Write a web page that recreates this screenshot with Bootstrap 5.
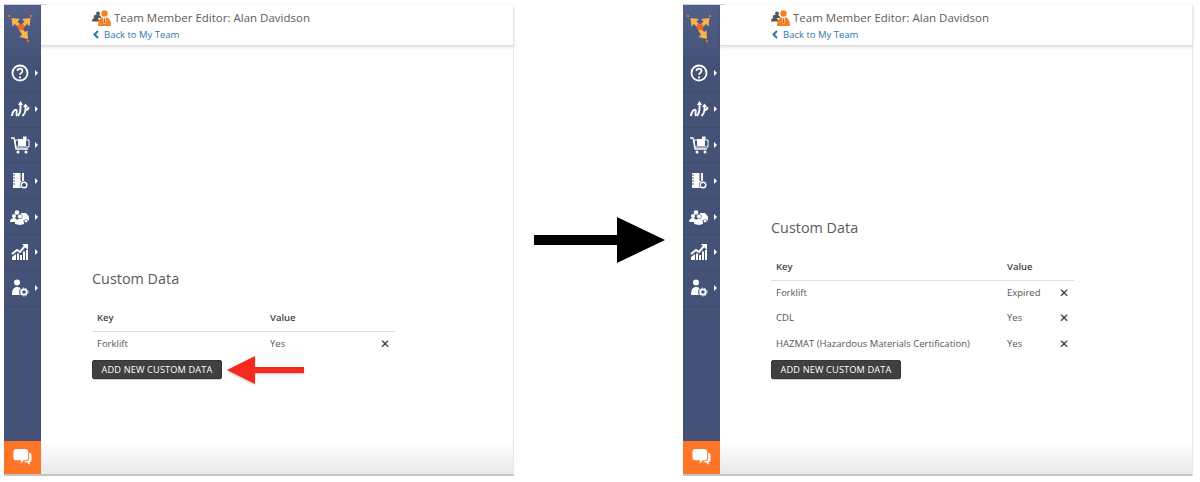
<!DOCTYPE html>
<html lang="en">
<head>
    <meta charset="UTF-8">
    <title>Team Member Editor</title>
    <link href="https://cdn.jsdelivr.net/npm/bootstrap@5.3.0/dist/css/bootstrap.min.css" rel="stylesheet">
    <style>
        html, body { height: 482px; overflow: hidden; background: #fff; }
        body { font-family: "Open Sans", "Liberation Sans", sans-serif; color: #555; padding: 5px 0 6px 4px; }
        .editor-panel { width: 510px; height: 471px; border-right: 1px solid #e8e8e8; border-bottom: 2px solid #c4c4c4; position: relative; }
        .editor-panel::before { content: ""; position: absolute; top: -1px; left: 0; width: 42px; height: 1px; background: #cdd1d9; }
        .arrow-gap { width: 169px; padding: 0 0 1px 20px; }
        .side-rail { width: 37px; background: #445277; }
        .rail-logo { height: 51px; padding-top: 7px; background: linear-gradient(#50608a, #465479); }
        .rail-item { height: 35.8px; border-bottom: 1px solid #3d4a6c; padding-left: 6px; }
        .rail-item svg { width: 20px; height: 20px; }
        .rail-caret { width: 0; height: 0; margin-left: 5px; border-left: 3px solid #fff; border-top: 3px solid transparent; border-bottom: 3px solid transparent; }
        .rail-chat { height: 33px; background: #ff7527; }
        .page-head { height: 41px; padding: 4px 0 0 51px; border-bottom: 1px solid #ddd; box-shadow: 0 1px 3px rgba(0,0,0,.14); margin-right: -1px; }
        .head-title { font-size: 11.5px; line-height: 17px; color: #5c5c5c; gap: 2px; }
        .back-link { font-size: 9.5px; line-height: 13px; color: #2a76ad; text-decoration: none; padding-top: 2px; margin-left: 1px; gap: 5px; }
        .page-main { background: linear-gradient(to bottom, #fff 0, #fff 93%, #e9e9e9 100%); }
        .data-block { width: 303px; margin-left: 51px; }
        .block-left { padding-top: 223px; }
        .block-right { padding-top: 172px; }
        .data-title { font-size: 14.4px; line-height: 20px; font-weight: 400; color: #5a5a5a; margin: 0 0 17px; }
        .data-grid { --bs-table-color: #555; font-size: 9.5px; margin: 0; table-layout: fixed; }
        .data-grid th { font-weight: 600; color: #444; height: 25px; padding: 0 0 0 5px; vertical-align: middle; border-bottom: 1px solid #dedede; }
        .data-grid td { height: 25px; padding: 0 0 0 5px; vertical-align: middle; border: 0; color: #555; }
        .block-right .data-grid td { height: 25.5px; }
        .data-grid .remove-cell { color: #333; font-size: 12px; padding: 0; text-align: center; }
        .add-data { --bs-btn-bg: #404040; --bs-btn-border-color: #363636; --bs-btn-color: #fff; --bs-btn-border-radius: 2px; --bs-btn-padding-y: 0; --bs-btn-padding-x: 0; --bs-btn-font-size: 9.2px; width: 130px; height: 19px; letter-spacing: .15px; line-height: 17px; display: block; box-shadow: 0 1px 1px rgba(0,0,0,.2); }
        .add-row { gap: 5px; margin-top: 4px; height: 19px; }
        .block-right .add-row { margin-top: 3px; }
        .red-arrow { margin: -5px 0; filter: drop-shadow(0 1px 1px rgba(0,0,0,.25)); }
    </style>
</head>
<body class="d-flex">
    <svg width="0" height="0" class="position-absolute">
        <symbol id="logo" viewBox="0 0 37 37">
            <circle cx="5" cy="4" r="1.300" fill="#f0652a"/><circle cx="27" cy="4" r="1.300" fill="#f0652a"/><circle cx="24" cy="29" r="1.300" fill="#f0652a"/>
            <path d="M7.500 6L16 7L13.500 9.500L17 13L14.500 15.500L11 12L8.500 14.500zM26.500 6L25.500 14.500L23 12L19.500 15.500L17 13L20.500 9.500L18 7zM24 27L15.500 25L18 22.500L15 18L18 16L21 20L23.500 18.500z" fill="#f7b44c"/>
            <circle cx="17" cy="15" r="3.300" fill="#f0652a"/>
        </symbol>
        <symbol id="help" viewBox="0 0 20 20">
            <circle cx="10" cy="10" r="7.500" fill="none" stroke="#fff" stroke-width="1.800"/>
            <path d="M7.500 8c0-3.200 5-3.200 5 0 0 1.800-2.500 1.900-2.500 3.800" fill="none" stroke="#fff" stroke-width="1.700"/>
            <circle cx="10" cy="14.300" r="1.100" fill="#fff"/>
        </symbol>
        <symbol id="routes" viewBox="0 0 20 20">
            <path d="M2 17c0-4 3-7 4.500-6 1 1-1 5 .5 6M8 17c1.500-2 2.500-5 2.500-7V5M12.500 17c2-2 3-4 3-6V7M15.500 11c1.500 0 3-1 3-3" fill="none" stroke="#fff" stroke-width="1.900"/>
            <path d="M8 6l2.500-4 2.500 4zM13 8l2.500-3.500L18 8z" fill="#fff"/>
        </symbol>
        <symbol id="cart" viewBox="0 0 20 20">
            <path d="M1 3h3l2 11h12" fill="none" stroke="#fff" stroke-width="1.300"/>
            <path d="M5 5h14v7H6z" fill="none" stroke="#fff"/>
            <rect x="8" y="4" width="8" height="7" fill="#fff"/><rect x="13" y="1.500" width="3.500" height="3" fill="#fff"/>
            <circle cx="8" cy="17" r="1.500" fill="#fff"/><circle cx="16" cy="17" r="1.500" fill="#fff"/>
        </symbol>
        <symbol id="book" viewBox="0 0 20 20">
            <rect x="3" y="2" width="11" height="15" fill="#fff"/>
            <path d="M2 4h3M2 7h3M2 10h3M2 13h3" stroke="#445277"/>
            <rect x="10.500" y="2" width="1.500" height="8" fill="#445277"/>
            <circle cx="14" cy="14" r="4.200" fill="#445277"/><circle cx="14" cy="14" r="2.800" fill="none" stroke="#fff" stroke-width="1.400"/>
        </symbol>
        <symbol id="team" viewBox="0 0 20 20">
            <path d="M11 6h5l3 3.500v4h-8z" fill="#fff"/><circle cx="16" cy="14" r="1.700" fill="#fff" stroke="#445277" stroke-width=".5"/>
            <circle cx="4" cy="9" r="2" fill="#fff"/><circle cx="7" cy="5.500" r="2.300" fill="#fff"/><circle cx="10" cy="9.500" r="2.400" fill="#fff" stroke="#445277" stroke-width=".6"/>
            <path d="M0 15c0-3 2-4 4-4s3 1 3 4zM5 17c0-3 2-5 5-5s4 2 4 5l-4 1z" fill="#fff"/>
        </symbol>
        <symbol id="chart" viewBox="0 0 20 20">
            <path d="M2 12l5-4 3 2 5-6" fill="none" stroke="#fff" stroke-width="2"/><path d="M12 2h6v6z" fill="#fff"/>
            <path d="M2 15l4-3v6H2zM7 11.500h2V18H7zM10 13h2v5h-2zM13 9.500h2V18h-2zM16 8h2v10h-2z" fill="#fff"/>
        </symbol>
        <symbol id="user-gear" viewBox="0 0 20 20">
            <circle cx="7" cy="4.500" r="3" fill="#fff"/>
            <path d="M2 17c0-6 2-8 5-8s4 1 4 3v5z" fill="#fff"/>
            <circle cx="14" cy="14" r="5" fill="#445277"/>
            <circle cx="14" cy="14" r="2.700" fill="none" stroke="#fff" stroke-width="1.800"/>
            <circle cx="14" cy="14" r="4" fill="none" stroke="#fff" stroke-width="1" stroke-dasharray="1.500 1.300"/>
        </symbol>
        <symbol id="chat" viewBox="0 0 20 20">
            <path d="M3.500 1h9.500a3 3 0 0 1 3 3v6a3 3 0 0 1-3 3h-1.500l-3.500 3.500 .5-3.500H3.500a3 3 0 0 1-3-3V4a3 3 0 0 1 3-3z" fill="#fff"/>
            <path d="M17 5a2.500 2.500 0 0 1 2.500 2.500v5a2.500 2.500 0 0 1-2 2.500l.5 3-3.500-3h-3l1.300-1h1.200a3.500 3.500 0 0 0 3-3z" fill="#fff"/>
        </symbol>
        <symbol id="member" viewBox="0 0 20 16">
            <circle cx="3.500" cy="6.500" r="1.700" fill="#555"/><circle cx="6" cy="3.500" r="1.900" fill="#555"/>
            <path d="M0 11.500c0-3 2-4 3.500-4S7 8 7 11.500zM3 6c0-1 1-1 3-1s3 1 3 3H4z" fill="#555"/>
            <circle cx="12.500" cy="3.500" r="3.200" fill="#f58220"/>
            <path d="M6 16c0-7 3-9 6.500-9S19 9 19 16z" fill="#f58220"/>
            <path d="M11 7h3l-.7 7h-1.600z" fill="#fff"/>
            <path d="M12 8h1l.4 4.500-.9 1.500-.9-1.500z" fill="#e0641a"/>
        </symbol>
        <symbol id="back" viewBox="0 0 6 9"><path d="M5 1L1.500 4.500 5 8" fill="none" stroke="#2a76ad" stroke-width="2"/></symbol>
    </svg>

    <section class="editor-panel d-flex flex-shrink-0">
        <nav class="side-rail d-flex flex-column flex-shrink-0">
            <div class="rail-logo"><svg width="37" height="37" class="d-block"><use href="#logo"/></svg></div>
            <div class="rail-item d-flex align-items-center"><svg><use href="#help"/></svg><span class="rail-caret"></span></div>
            <div class="rail-item d-flex align-items-center"><svg><use href="#routes"/></svg><span class="rail-caret"></span></div>
            <div class="rail-item d-flex align-items-center"><svg><use href="#cart"/></svg><span class="rail-caret"></span></div>
            <div class="rail-item d-flex align-items-center"><svg><use href="#book"/></svg><span class="rail-caret"></span></div>
            <div class="rail-item d-flex align-items-center"><svg><use href="#team"/></svg><span class="rail-caret"></span></div>
            <div class="rail-item d-flex align-items-center"><svg><use href="#chart"/></svg><span class="rail-caret"></span></div>
            <div class="rail-item d-flex align-items-center"><svg><use href="#user-gear"/></svg><span class="rail-caret"></span></div>
            <div class="rail-chat mt-auto d-flex align-items-center justify-content-center"><svg width="19" height="19"><use href="#chat"/></svg></div>
        </nav>
        <div class="page-main flex-grow-1 d-flex flex-column">
            <header class="page-head">
                <div class="head-title d-flex align-items-center"><svg width="20" height="16"><use href="#member"/></svg>Team Member Editor: Alan Davidson</div>
                <a href="#" class="back-link d-flex align-items-center"><svg width="6" height="9"><use href="#back"/></svg>Back to My Team</a>
            </header>
            <div class="data-block block-left">
                <h5 class="data-title">Custom Data</h5>
                <table class="table data-grid">
                    <colgroup><col style="width:173px"><col><col style="width:20px"></colgroup>
                    <thead><tr><th>Key</th><th>Value</th><th></th></tr></thead>
                    <tbody><tr><td>Forklift</td><td>Yes</td><td class="remove-cell">&#10005;</td></tr></tbody>
                </table>
                <div class="d-flex align-items-center add-row">
                    <button type="button" class="btn add-data">ADD NEW CUSTOM DATA</button>
                    <svg width="78" height="28" viewBox="0 0 78 28" class="red-arrow flex-shrink-0"><path d="M0 14L28 0V11H77V17H28V28z" fill="#f42a1c"/></svg>
                </div>
            </div>
        </div>
    </section>

    <div class="arrow-gap d-flex flex-shrink-0 align-items-center">
        <svg width="131" height="46" viewBox="0 0 131 46" class="flex-shrink-0"><path d="M0 18H83V0L131 23L83 46V28H0z" fill="#000"/></svg>
    </div>

    <section class="editor-panel d-flex flex-shrink-0">
        <nav class="side-rail d-flex flex-column flex-shrink-0">
            <div class="rail-logo"><svg width="37" height="37" class="d-block"><use href="#logo"/></svg></div>
            <div class="rail-item d-flex align-items-center"><svg><use href="#help"/></svg><span class="rail-caret"></span></div>
            <div class="rail-item d-flex align-items-center"><svg><use href="#routes"/></svg><span class="rail-caret"></span></div>
            <div class="rail-item d-flex align-items-center"><svg><use href="#cart"/></svg><span class="rail-caret"></span></div>
            <div class="rail-item d-flex align-items-center"><svg><use href="#book"/></svg><span class="rail-caret"></span></div>
            <div class="rail-item d-flex align-items-center"><svg><use href="#team"/></svg><span class="rail-caret"></span></div>
            <div class="rail-item d-flex align-items-center"><svg><use href="#chart"/></svg><span class="rail-caret"></span></div>
            <div class="rail-item d-flex align-items-center"><svg><use href="#user-gear"/></svg><span class="rail-caret"></span></div>
            <div class="rail-chat mt-auto d-flex align-items-center justify-content-center"><svg width="19" height="19"><use href="#chat"/></svg></div>
        </nav>
        <div class="page-main flex-grow-1 d-flex flex-column">
            <header class="page-head">
                <div class="head-title d-flex align-items-center"><svg width="20" height="16"><use href="#member"/></svg>Team Member Editor: Alan Davidson</div>
                <a href="#" class="back-link d-flex align-items-center"><svg width="6" height="9"><use href="#back"/></svg>Back to My Team</a>
            </header>
            <div class="data-block block-right">
                <h5 class="data-title">Custom Data</h5>
                <table class="table data-grid">
                    <colgroup><col style="width:231px"><col><col style="width:20px"></colgroup>
                    <thead><tr><th>Key</th><th>Value</th><th></th></tr></thead>
                    <tbody>
                        <tr><td>Forklift</td><td>Expired</td><td class="remove-cell">&#10005;</td></tr>
                        <tr><td>CDL</td><td>Yes</td><td class="remove-cell">&#10005;</td></tr>
                        <tr><td>HAZMAT (Hazardous Materials Certification)</td><td>Yes</td><td class="remove-cell">&#10005;</td></tr>
                    </tbody>
                </table>
                <div class="add-row"><button type="button" class="btn add-data">ADD NEW CUSTOM DATA</button></div>
            </div>
        </div>
    </section>

    <script src="https://cdn.jsdelivr.net/npm/bootstrap@5.3.0/dist/js/bootstrap.bundle.min.js"></script>
</body>
</html>
